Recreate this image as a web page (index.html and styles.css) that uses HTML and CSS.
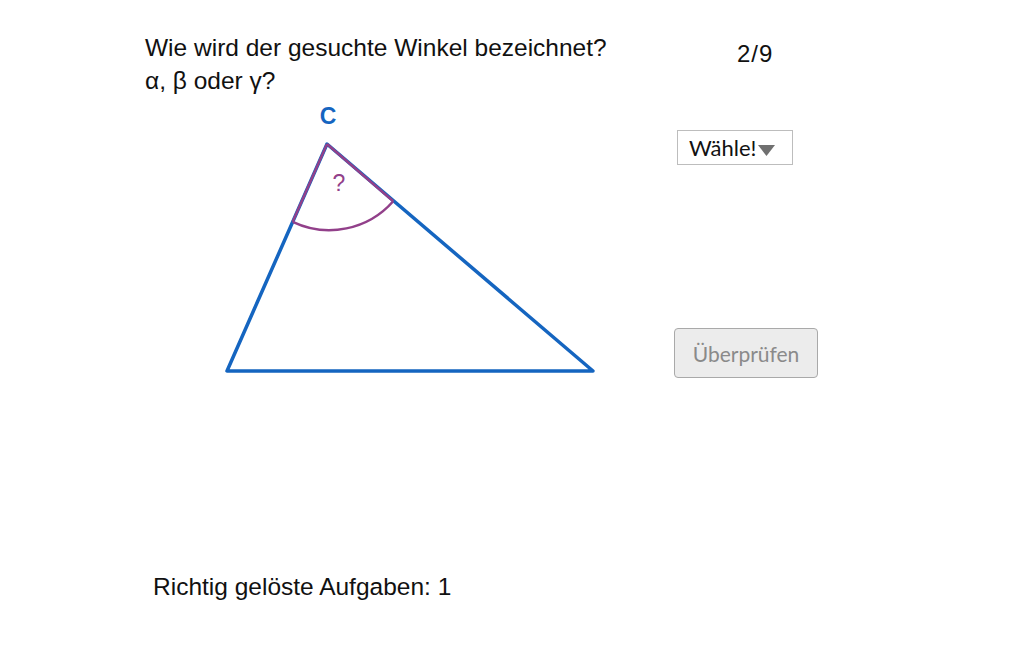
FILE: index.html
```html
<!DOCTYPE html>
<html lang="de">
<head>
<meta charset="utf-8">
<title>Winkel</title>
<link rel="stylesheet" href="styles.css">
</head>
<body>
<div class="app">
  <div class="stage">
    <div class="left">
      <div class="question">
        <div class="qline">Wie wird der gesuchte Winkel bezeichnet?</div>
        <div class="qline">α, β oder γ?</div>
      </div>
      <svg class="figure" width="400" height="280" viewBox="215 100 400 280">
        <text x="328" y="123.5" class="label-c">C</text>
        <polygon points="327,144 227,371 593,371" class="tri"/>
        <path d="M 292.7 221.8 A 85 85 0 0 0 393.2 201.2" class="arc"/>
        <line x1="327" y1="144" x2="292.7" y2="221.8" class="arc"/>
        <line x1="327" y1="144" x2="393.2" y2="201.2" class="arc"/>
        <text x="339" y="191" class="qmark">?</text>
      </svg>
    </div>
    <div class="right">
      <div class="counter">2/9</div>
      <div class="select">
        <span class="select-text">Wähle!</span>
        <svg class="caret" width="17" height="12" viewBox="0 0 17 12"><polygon points="0,1 17,1 8.5,12" fill="#707070"/></svg>
      </div>
      <button class="check" type="button">Überprüfen</button>
    </div>
  </div>
  <div class="score">Richtig gelöste Aufgaben: 1</div>
</div>
</body>
</html>
```
FILE: styles.css
```css
html, body {
  margin: 0;
  padding: 0;
  background: #ffffff;
}
.app {
  width: 1032px;
  height: 645px;
  overflow: hidden;
  font-family: "Liberation Sans", Arial, sans-serif;
  color: #111111;
}
.stage {
  display: flex;
  align-items: flex-start;
  padding-left: 145px;
  padding-top: 31px;
}
.left {
  width: 530px;
  display: flex;
  flex-direction: column;
}
.question {
  font-size: 24.5px;
  line-height: 33px;
}
.figure {
  display: block;
  margin-left: 70px;
  margin-top: 3px;
}
.tri {
  fill: none;
  stroke: #1565c0;
  stroke-width: 3.5;
  stroke-linejoin: round;
}
.arc {
  fill: none;
  stroke: #92408a;
  stroke-width: 2.5;
}
.label-c {
  font-family: "Liberation Sans", Arial, sans-serif;
  font-weight: bold;
  font-size: 23px;
  fill: #1565c0;
  text-anchor: middle;
}
.qmark {
  font-family: "Liberation Sans", Arial, sans-serif;
  font-size: 23px;
  fill: #92408a;
  text-anchor: middle;
}
.right {
  display: flex;
  flex-direction: column;
  align-items: flex-start;
}
.counter {
  font-size: 24px;
  line-height: 28px;
  letter-spacing: 1px;
  margin-left: 62px;
  margin-top: 9px;
}
.select {
  margin-top: 62px;
  margin-left: 2px;
  width: 116px;
  height: 35px;
  border: 1px solid #bdbdbd;
  box-sizing: border-box;
  display: flex;
  align-items: center;
  padding-left: 11px;
  gap: 2px;
  font-family: Lato, "Liberation Sans", sans-serif;
  font-size: 22px;
}
.caret {
  margin-top: 4px;
}
.check {
  margin-top: 163px;
  margin-left: -1px;
  width: 144px;
  height: 50px;
  background: #ececec;
  border: 1px solid #a9a9a9;
  border-radius: 4px;
  font-family: Lato, "Liberation Sans", sans-serif;
  font-size: 21px;
  color: #8a8a8a;
  padding: 0;
}
.score {
  font-size: 24.5px;
  line-height: 28px;
  margin-left: 153px;
  margin-top: 193px;
}
```
